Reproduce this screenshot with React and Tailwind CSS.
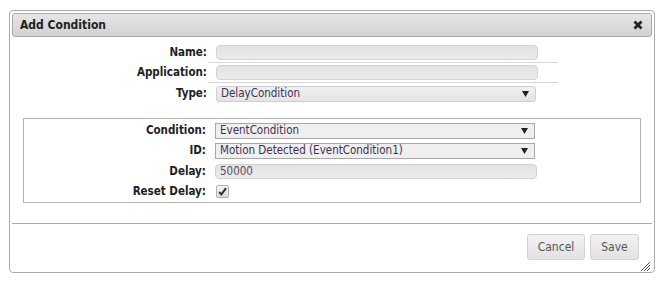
import { useState } from 'react'

const font = { fontFamily: '"DejaVu Sans Condensed", "DejaVu Sans", sans-serif' }

function Arrow() {
  return (
    <svg width="7" height="6" viewBox="0 0 7 6" className="shrink-0">
      <path d="M0 0h7L3.5 6z" fill="#222" />
    </svg>
  )
}

function Label({ children, inner = false }) {
  return (
    <div
      className={`${inner ? 'w-[182px]' : 'w-[195px]'} shrink-0 text-right text-[11.5px] font-bold text-[#222]`}
    >
      {children}
    </div>
  )
}

function TextInput({ value }) {
  return (
    <div className="flex h-[15px] w-[322px] items-center rounded-[4px] border border-[#d3d3d3] bg-gradient-to-b from-[#e2e2e2] to-[#ececec] px-[4px] text-[11.5px] text-[#5b4a63]">
      {value}
    </div>
  )
}

function Select({ value, rounded = false }) {
  return (
    <div
      className={`flex h-[16px] w-[320px] items-center justify-between border px-[4px] pr-[6px] text-[11.5px] text-[#3f3050] ${
        rounded
          ? 'rounded-[3px] border-[#cfcfcf] bg-gradient-to-b from-[#f0f0f0] to-[#e4e4e4]'
          : 'border-[#a8a8a8] bg-[#efefef]'
      }`}
    >
      <span>{value}</span>
      <Arrow />
    </div>
  )
}

export default function App() {
  const [reset, setReset] = useState(true)

  return (
    <div className="h-[284px] w-[664px] bg-white pl-[9px] pt-[10px]" style={font}>
      <div className="flex h-[263px] w-[646px] flex-col rounded-[4px] border border-[#aaaaaa] bg-white p-[2px]">
        {/* title bar */}
        <div className="flex h-[24px] shrink-0 items-center justify-between rounded-[3px] border border-[#aaaaaa] bg-gradient-to-b from-[#e6e6e6] to-[#d2d2d2] pl-[7px] pr-[8px]">
          <span className="text-[12px] font-bold text-[#222]">Add Condition</span>
          <svg width="10" height="10" viewBox="0 0 10 10">
            <path d="M1.5 1.5l7 7M8.5 1.5l-7 7" stroke="#222" strokeWidth="2.8" />
          </svg>
        </div>

        {/* top fields */}
        <div className="flex flex-col pt-[5px]">
          <div className="flex h-[21px] items-center pt-[1px]">
            <Label>Name:</Label>
            <div className="ml-[1px] flex h-full w-[350px] items-center border-b border-[#d8d8d8] pl-[8px]">
              <TextInput value="" />
            </div>
          </div>
          <div className="flex h-[20px] items-center">
            <Label>Application:</Label>
            <div className="ml-[1px] flex h-full w-[350px] items-center border-b border-[#d8d8d8] pl-[8px]">
              <TextInput value="" />
            </div>
          </div>
          <div className="flex h-[21px] items-center">
            <Label>Type:</Label>
            <div className="ml-[9px]">
              <Select value="DelayCondition" rounded />
            </div>
          </div>
        </div>

        {/* condition group */}
        <div className="mx-[11px] mt-[14px] flex flex-col border border-[#b4b4b4] pb-[1px] pt-[2px]">
          <div className="flex h-[20px] items-center">
            <Label inner>Condition:</Label>
            <div className="ml-[9px]">
              <Select value="EventCondition" />
            </div>
          </div>
          <div className="flex h-[20px] items-center">
            <Label inner>ID:</Label>
            <div className="ml-[9px]">
              <Select value="Motion Detected (EventCondition1)" />
            </div>
          </div>
          <div className="flex h-[21px] items-center">
            <Label inner>Delay:</Label>
            <div className="ml-[9px]">
              <TextInput value="50000" />
            </div>
          </div>
          <div className="flex h-[19px] items-center">
            <Label inner>Reset Delay:</Label>
            <button
              type="button"
              onClick={() => setReset(!reset)}
              className="ml-[10px] flex h-[13px] w-[13px] items-center justify-center rounded-[2px] border border-[#b0b0b0] bg-gradient-to-b from-[#f4f4f4] to-[#dcdcdc]"
            >
              {reset && (
                <svg width="9" height="9" viewBox="0 0 9 9">
                  <path d="M1.2 5l2.2 2.4L8 1.2" fill="none" stroke="#333" strokeWidth="2" />
                </svg>
              )}
            </button>
          </div>
        </div>

        {/* footer */}
        <div className="mt-[20px] flex flex-1 flex-col border-t border-[#aaaaaa]">
          <div className="flex justify-end gap-[5px] pr-[13px] pt-[10px]">
            <button className="h-[26px] w-[58px] rounded-[3px] border border-[#d3d3d3] bg-gradient-to-b from-[#f2f2f2] to-[#e2e2e2] text-[12px] text-[#555]">
              Cancel
            </button>
            <button className="h-[26px] w-[49px] rounded-[3px] border border-[#d3d3d3] bg-gradient-to-b from-[#f2f2f2] to-[#e2e2e2] text-[12px] text-[#555]">
              Save
            </button>
          </div>
          <div className="mt-auto flex justify-end pb-[1px] pr-[1px]">
            <svg width="12" height="12" viewBox="0 0 12 12">
              <path d="M11 2L2 11M11 5L5 11M11 8L8 11" stroke="#555" strokeWidth="1" />
            </svg>
          </div>
        </div>
      </div>
    </div>
  )
}
